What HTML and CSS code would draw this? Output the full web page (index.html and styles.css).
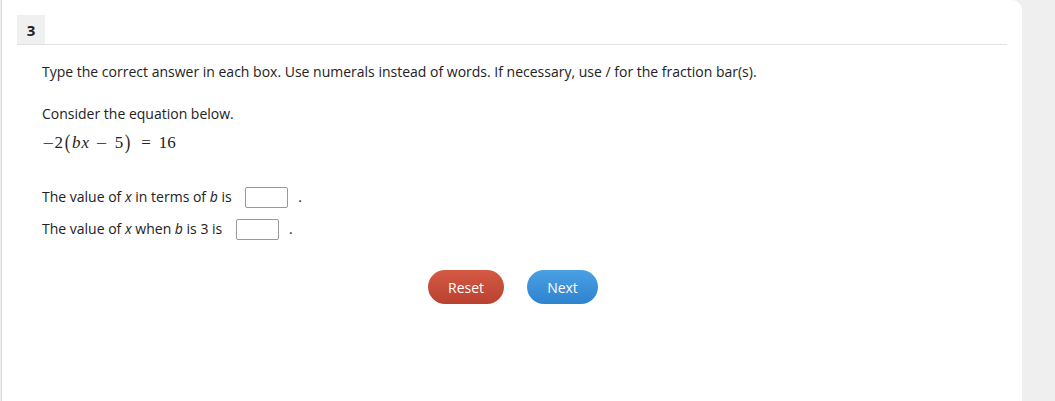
FILE: index.html
```html
<!DOCTYPE html>
<html>
<head>
<meta charset="utf-8">
<link rel="stylesheet" href="styles.css">
</head>
<body>
<div class="page">
  <div class="card">
    <div class="qhead"><span class="qnum">3</span></div>
    <div class="content">
      <p class="instr">Type the correct answer in each box. Use numerals instead of words. If necessary, use / for the fraction bar(s).</p>
      <p class="consider">Consider the equation below.</p>
      <div class="eq"><span class="minus">−</span><span>2</span><span class="paren">(</span><i>bx</i><span class="op minus">−</span><span>5</span><span class="paren">)</span><span class="op eqs">=</span><span>16</span></div>
      <p class="row first">The value of <i>x</i> in terms of <i>b</i> is <span class="box"></span><span class="dot">.</span></p>
      <p class="row">The value of <i>x</i> when <i>b</i> is 3 is <span class="box"></span><span class="dot">.</span></p>
      <div class="actions">
        <button class="btn reset">Reset</button>
        <button class="btn next">Next</button>
      </div>
    </div>
  </div>
</div>
</body>
</html>
```
FILE: styles.css
```css
html, body {
  margin: 0;
  padding: 0;
  background: #efefef;
  font-family: "Open Sans", "Liberation Sans", sans-serif;
  font-size: 14px;
  color: #222;
}
.page {
  height: 401px;
  overflow: hidden;
  padding-left: 1px;
}
.card {
  width: 1021px;
  height: 401px;
  background: #fff;
  border-left: 1px solid #d9d9d9;
  border-top-right-radius: 10px;
  box-sizing: border-box;
  padding: 15px 15px 0 15px;
}
.qhead {
  display: flex;
  border-bottom: 1px solid #e2e2e2;
}
.qnum {
  width: 28px;
  height: 29px;
  background: #f0f0f0;
  display: flex;
  align-items: center;
  justify-content: center;
  font-weight: 700;
  font-size: 15px;
  color: #222;
}
.content {
  padding-left: 25px;
}
.instr {
  margin: 17px 0 0 0;
  line-height: 20px;
}
.consider {
  margin: 22px 0 0 0;
  line-height: 20px;
}
.eq {
  margin-top: 6px;
  height: 26px;
  display: flex;
  align-items: center;
  font-family: "Liberation Serif", "DejaVu Serif", serif;
  font-size: 17px;
  color: #222;
}
.eq .minus {
  font-family: "DejaVu Serif", serif;
  font-size: 15px;
  transform: scaleY(0.6);
  display: inline-block;
}
.eq i {
  font-style: italic;
  margin-left: 1px;
  letter-spacing: 1px;
}
.eq .paren {
  font-size: 21px;
  transform: scaleX(0.8);
  display: inline-block;
  margin: 0 0 1px 1px;
}
.eq .op {
  margin: 0 7px 0 5px;
}
.eq .eqs {
  margin: 0 8px 0 10px;
}
.row {
  margin: 10px 0 0 0;
  height: 22px;
  line-height: 22px;
  white-space: nowrap;
}
.row.first {
  margin-top: 30px;
}
.box {
  display: inline-block;
  vertical-align: middle;
  width: 41px;
  height: 19px;
  border: 1px solid #999;
  border-radius: 2px;
  margin-left: 10px;
  margin-top: -2px;
}
.dot {
  margin-left: 10px;
}
.actions {
  display: flex;
  gap: 23px;
  margin-top: 30px;
  padding-left: 386px;
}
.btn {
  height: 34px;
  border: none;
  border-radius: 17px;
  color: #fff;
  font-family: "Open Sans", "Liberation Sans", sans-serif;
  font-size: 14px;
  padding: 0;
  cursor: pointer;
}
.reset {
  width: 76px;
  background: linear-gradient(#d45a44, #b9412f);
}
.next {
  width: 71px;
  background: linear-gradient(#4aa0e3, #2e83cf);
}
```
